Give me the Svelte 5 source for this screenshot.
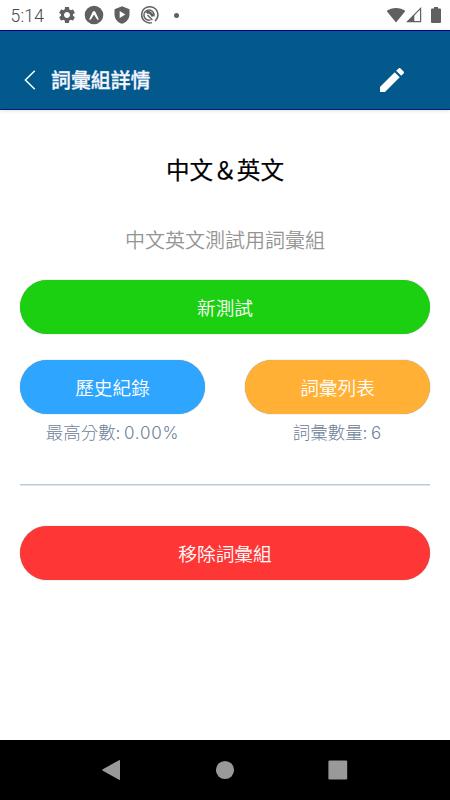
<script lang="ts">
    const title = '詞彙組詳情';
    const group = {
        name: '中文＆英文',
        description: '中文英文測試用詞彙組',
        bestScore: '0.00%',
        wordCount: 6
    };
</script>

<div class="screen">
    <div class="status-bar">
        <span class="time">5:14</span>
        <div class="notifications">
            <svg width="20" height="20" viewBox="0 0 24 24" fill="#606060">
                <path d="M19.14 12.94c.04-.3.06-.61.06-.94 0-.32-.02-.64-.07-.94l2.03-1.58c.18-.14.23-.41.12-.61l-1.92-3.32c-.12-.22-.37-.29-.59-.22l-2.39.96c-.5-.38-1.03-.7-1.62-.94l-.36-2.54c-.04-.24-.24-.41-.48-.41h-3.84c-.24 0-.43.17-.47.41l-.36 2.54c-.59.24-1.13.57-1.62.94l-2.39-.96c-.22-.08-.47 0-.59.22L2.74 8.87c-.12.21-.08.47.12.61l2.03 1.58c-.05.3-.09.63-.09.94s.02.64.07.94l-2.03 1.58c-.18.14-.23.41-.12.61l1.92 3.32c.12.22.37.29.59.22l2.39-.96c.5.38 1.03.7 1.62.94l.36 2.54c.05.24.24.41.48.41h3.84c.24 0 .44-.17.47-.41l.36-2.54c.59-.24 1.13-.56 1.62-.94l2.39.96c.22.08.47 0 .59-.22l1.92-3.32c.12-.22.07-.47-.12-.61l-2.01-1.58zM12 15.6c-1.98 0-3.6-1.62-3.6-3.6s1.62-3.6 3.6-3.6 3.6 1.62 3.6 3.6-1.62 3.6-3.6 3.6z" />
            </svg>
            <svg width="20" height="20" viewBox="0 0 20 20">
                <circle cx="10" cy="10" r="9.3" fill="#606060" />
                <path d="M5.2 14.2 8.6 7.1Q10 4.9 11.4 7.1L14.8 14.2Q13.6 15.4 12.6 13.8L10 9.4 7.4 13.8Q6.4 15.4 5.2 14.2Z" fill="#fff" />
            </svg>
            <svg width="20" height="20" viewBox="0 0 24 24" fill="#606060">
                <path fill-rule="evenodd" d="M12 1.5 3 5.2V11c0 5.4 3.8 10.2 9 11.6 5.2-1.4 9-6.2 9-11.6V5.2ZM9.2 7.3v8.4L16 11.5Z" />
            </svg>
            <svg width="20" height="20" viewBox="0 0 20 20" fill="none" stroke="#606060">
                <path d="M16 16A8.1 8.1 0 1 0 13 17.6" stroke-width="1.5" />
                <path d="M11.5 14.9A5.1 5.1 0 1 1 14.9 11.4" stroke-width="1.5" />
                <path d="M8.5 10 13.4 15" stroke-width="1.4" />
                <path d="M7.4 7.8C9.8 6.2 12.6 8.2 14 11.4" stroke-width="2.7" />
            </svg>
            <span class="dot"></span>
        </div>
        <div class="indicators">
            <svg width="20" height="16" viewBox="0 0 20 16" fill="#606060">
                <path d="M.6 4.1C5.8-.2 14.2-.2 19.4 4.1L10 15.6Z" />
            </svg>
            <svg width="16" height="16" viewBox="0 0 16 16">
                <path d="M14.6 1.4V14.7H1.5Z" fill="none" stroke="#606060" stroke-width="1.2" />
                <path d="M1 15 8.3 7.6V15Z" fill="#606060" />
            </svg>
            <svg class="battery" width="10" height="16" viewBox="0 0 10 16" fill="#606060">
                <path d="M3 0h4v1.6h2q1 0 1 1V15q0 1-1 1H1q-1 0-1-1V2.6q0-1 1-1h2Z" />
            </svg>
        </div>
    </div>

    <header>
        <svg class="back" width="12" height="20" viewBox="0 0 12 20" fill="none" stroke="#fff" stroke-width="1.5">
            <path d="M10.8 .7 1.4 10 10.8 19.3" />
        </svg>
        <h1>{title}</h1>
        <svg class="edit" width="32" height="32" viewBox="0 0 24 24" fill="#fff">
            <path d="M3 17.25V21h3.75L17.81 9.94l-3.75-3.75L3 17.25zM20.71 7.04c.39-.39.39-1.02 0-1.41l-2.34-2.34c-.39-.39-1.02-.39-1.41 0l-1.83 1.83 3.75 3.75 1.83-1.83z" />
        </svg>
    </header>

    <main>
        <h2>{group.name}</h2>
        <p class="description">{group.description}</p>
        <button class="green">新測試</button>
        <div class="row">
            <div class="column">
                <button class="blue">歷史紀錄</button>
                <p class="info">最高分數: <span class="value">{group.bestScore}</span></p>
            </div>
            <div class="column">
                <button class="orange">詞彙列表</button>
                <p class="info">詞彙數量: <span class="value">{group.wordCount}</span></p>
            </div>
        </div>
        <hr />
        <button class="red">移除詞彙組</button>
    </main>

    <nav>
        <svg width="20" height="22" viewBox="0 0 20 22" fill="#999">
            <path d="M18 1.2Q19 .7 19 1.7V20.3Q19 21.3 18 20.8L1.8 11.8Q.6 11 1.8 10.2Z" />
        </svg>
        <svg width="20" height="20" viewBox="0 0 20 20" fill="#999">
            <circle cx="10" cy="10" r="9.1" />
        </svg>
        <svg width="20" height="20" viewBox="0 0 20 20" fill="#999">
            <rect x=".4" y=".6" width="18.8" height="18.8" rx="1.2" />
        </svg>
    </nav>
</div>

<style>
    :global(body) {
        margin: 0;
        background: #fff;
    }

    .screen {
        display: flex;
        flex-direction: column;
        width: 450px;
        height: 800px;
        font-family: "Noto Sans CJK TC", sans-serif;
        background: #fff;
    }

    .status-bar {
        display: flex;
        align-items: center;
        box-sizing: border-box;
        height: 30px;
        padding: 0 9px 0 10.5px;
    }

    .time {
        width: 46px;
        font-family: Roboto, sans-serif;
        font-size: 17.5px;
        font-weight: 300;
        line-height: 30px;
        color: #484848;
        letter-spacing: 0.2px;
        padding-top: 1px;
    }

    .notifications {
        display: flex;
        align-items: center;
        gap: 7.5px;
    }

    .dot {
        width: 5px;
        height: 5px;
        margin-left: 7px;
        border-radius: 50%;
        background: #606060;
    }

    .indicators {
        display: flex;
        align-items: center;
        margin-left: auto;
    }

    .indicators svg:first-child {
        margin-left: -1px;
    }

    .battery {
        margin-left: 9px;
    }

    header {
        display: flex;
        align-items: center;
        box-sizing: border-box;
        height: 80px;
        padding: 20px 42px 0 24px;
        background: #03588c;
        border-top: 1px solid #000080;
        border-bottom: 1px solid #002279;
        box-shadow: 0 1px 4px rgba(0, 0, 0, 0.12);
    }

    h1 {
        margin: 0 0 0 15px;
        font-size: 19.9px;
        font-weight: 500;
        line-height: 30px;
        color: #f3f6ff;
        -webkit-text-stroke: 0.3px #f3f6ff;
    }

    .edit {
        margin-left: auto;
    }

    main {
        flex: 1;
        padding: 39px 20px 0;
    }

    h2 {
        margin: 0;
        font-size: 23.6px;
        font-weight: 400;
        line-height: 40px;
        text-align: center;
        color: #000;
        -webkit-text-stroke: 0.2px #000;
    }

    .description {
        margin: 36px 0 25px;
        font-size: 20px;
        font-weight: 350;
        line-height: 30px;
        text-align: center;
        color: #949494;
    }

    button {
        display: block;
        width: 100%;
        height: 54px;
        padding: 0 0 1px;
        border: none;
        border-radius: 27px;
        font-family: inherit;
        font-size: 18.7px;
        font-weight: 350;
        color: #fff;
        box-shadow: 0 0 1px rgba(0, 0, 0, 0.5);
    }

    .green {
        background: #1bd010;
    }

    .blue {
        background: #2ea6ff;
    }

    .orange {
        background: #ffb035;
    }

    .red {
        background: #ff3636;
    }

    .row {
        display: flex;
        gap: 40px;
        margin-top: 26px;
    }

    .column {
        flex: 1;
    }

    .info {
        margin: 5px 0 0;
        font-size: 17.5px;
        font-weight: 300;
        line-height: 26px;
        text-align: center;
        color: #6d8099;
        white-space: nowrap;
    }

    .value {
        font-family: Inter, sans-serif;
        font-size: 17px;
        font-weight: 300;
        letter-spacing: 0.8px;
    }

    hr {
        height: 1px;
        margin: 38px 0 40px;
        border: none;
        background: #b7cbdc;
        border-bottom: 1px solid #dce6ed;
    }

    nav {
        display: flex;
        align-items: center;
        justify-content: center;
        gap: 93px;
        height: 60px;
        background: #000;
    }

    nav svg:first-child {
        margin-left: -1px;
        margin-right: 1px;
    }
</style>
